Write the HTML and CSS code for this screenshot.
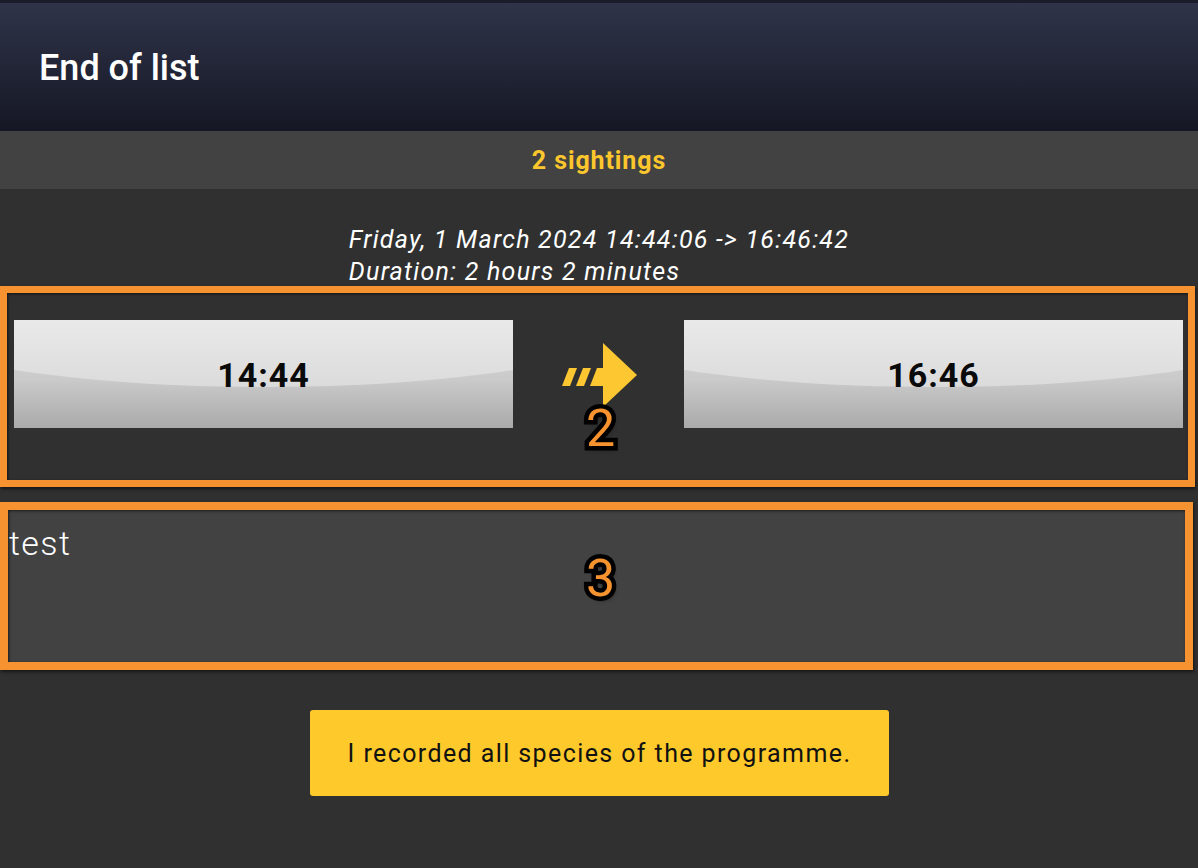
FILE: index.html
```html
<!DOCTYPE html>
<html lang="en">
<head>
<meta charset="utf-8">
<title>End of list</title>
<link rel="stylesheet" href="styles.css">
</head>
<body>
<div class="app">
  <header class="topbar">
    <h1 class="title">End of list</h1>
  </header>
  <div class="summary">2 sightings</div>
  <main class="content">
    <div class="period">
      <div class="period-text">
        <div>Friday, 1 March 2024 14:44:06 -&gt; 16:46:42</div>
        <div>Duration: 2 hours 2 minutes</div>
      </div>
    </div>

    <section class="frame frame-times">
      <button class="time-btn"><span class="time-label">14:44</span></button>
      <div class="arrow-cell">
        <svg class="arrow" width="80" height="68" viewBox="0 0 80 68" aria-hidden="true">
          <polygon points="43,2 77,34 43,66" fill="#fdc731"/>
          <polygon points="30,45 37,27 45,27 45,45" fill="#fdc731"/>
          <polygon points="16,45 23,27 31,27 24,45" fill="#fdc731"/>
          <polygon points="2,45 9,27 17,27 10,45" fill="#fdc731"/>
        </svg>
      </div>
      <button class="time-btn"><span class="time-label">16:46</span></button>
      <span class="marker marker-2">2</span>
    </section>

    <section class="frame frame-note">
      <div class="note">test</div>
      <span class="marker marker-3">3</span>
    </section>

    <div class="actions">
      <button class="confirm">I recorded all species of the programme.</button>
    </div>
  </main>
</div>
</body>
</html>
```

FILE: styles.css
```css
* { box-sizing: border-box; }

html, body {
  margin: 0;
  padding: 0;
  height: 100%;
}

body {
  background: #303030;
  font-family: Roboto, "Liberation Sans", Arial, sans-serif;
  color: #fff;
  overflow: hidden;
}

.app {
  display: flex;
  flex-direction: column;
  min-height: 100%;
}

.topbar {
  height: 131px;
  border-top: 3px solid #1b1c2a;
  background: linear-gradient(#2f3449, #151724);
  display: flex;
  align-items: center;
  padding-left: 39px;
}

.title {
  margin: 0;
  font-size: 36px;
  font-weight: 500;
  color: #fff;
  padding-top: 2px;
}

.summary {
  height: 58px;
  background: #424242;
  display: flex;
  align-items: center;
  justify-content: center;
  color: #fcc62d;
  font-size: 25px;
  font-weight: 700;
  letter-spacing: 0.9px;
}

.content {
  flex: 1;
  background: #303030;
  display: flex;
  flex-direction: column;
}

.period {
  display: flex;
  justify-content: center;
  margin-top: 35px;
  margin-bottom: -2px;
}

.period-text {
  font-size: 25px;
  font-style: italic;
  line-height: 32px;
  letter-spacing: 1.25px;
  color: #fff;
}

.frame {
  position: relative;
  border: 7px solid #f6922f;
  box-shadow: 1px 2px 3px rgba(0, 0, 0, 0.55), inset 1px 1px 3px rgba(0, 0, 0, 0.6);
}

.frame-times {
  width: 1195px;
  display: flex;
  align-items: flex-start;
  padding: 27px 5px 52px 7px;
}

.time-btn {
  position: relative;
  flex: 0 0 499px;
  height: 108px;
  border: none;
  padding: 0;
  overflow: hidden;
  background: linear-gradient(#dcdcdc, #cacaca 55%, #aaaaaa);
  font-family: inherit;
  display: flex;
  align-items: center;
  justify-content: center;
}

.time-btn::before {
  content: "";
  position: absolute;
  left: -150px;
  width: 800px;
  top: -89px;
  height: 156px;
  border-radius: 50%;
  background: linear-gradient(#e6e6e6 0%, #e9e9e9 58%, #dbdbdb 100%);
}

.time-label {
  position: relative;
  font-size: 34px;
  font-weight: 700;
  letter-spacing: 1px;
  color: #0a0a0a;
  padding-top: 2px;
}

.arrow-cell {
  flex: 0 0 171px;
  height: 108px;
  display: flex;
  align-items: center;
  justify-content: center;
}

.arrow {
  display: block;
  margin-left: 2px;
  margin-top: 2px;
}

.marker {
  position: absolute;
  left: 50%;
  transform: translateX(-50%);
  font-size: 52px;
  line-height: 52px;
  font-weight: 400;
  color: #f7932f;
  -webkit-text-stroke: 9px #000;
  paint-order: stroke fill;
  text-shadow: 2px 3px 4px rgba(0, 0, 0, 0.8);
}

.marker-2 { top: 110px; margin-left: 3px; }
.marker-3 { top: 43px; margin-left: 4px; }

.frame-note {
  width: 1193px;
  height: 168px;
  margin-top: 15px;
  border-width: 8px;
  background: #424242;
}

.note {
  padding: 13px 0 0 1px;
  font-size: 34px;
  font-weight: 300;
  letter-spacing: 1.4px;
  color: #fff;
}

.actions {
  display: flex;
  justify-content: center;
  margin-top: 40px;
}

.confirm {
  height: 86px;
  width: 579px;
  border: none;
  border-radius: 3px;
  background: #fec92b;
  color: #111;
  font-family: inherit;
  font-size: 25px;
  font-weight: 400;
  letter-spacing: 1.4px;
  margin-left: 1px;
  padding: 0;
}
```
